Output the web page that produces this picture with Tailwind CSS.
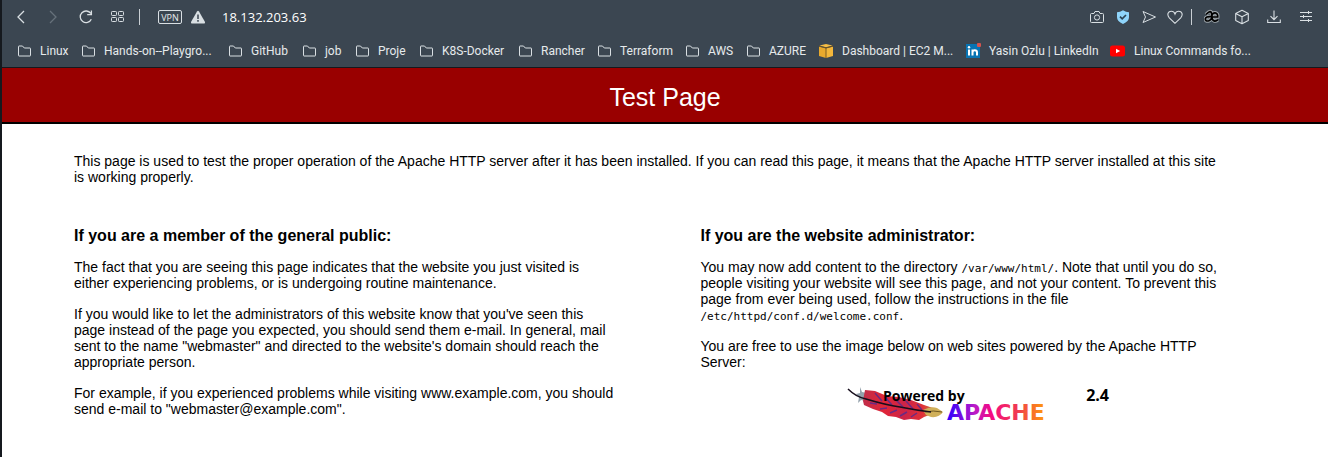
<!DOCTYPE html>
<html lang="en">
<head>
<meta charset="utf-8">
<meta name="viewport" content="width=device-width, initial-scale=1">
<title>Test Page</title>
<script src="https://cdn.jsdelivr.net/npm/@tailwindcss/browser@4"></script>
</head>
<body class="bg-white text-black">
<svg class="hidden" aria-hidden="true">
  <symbol id="folder" viewBox="0 0 14 12"><path d="M.5 10.500V1.500q0-.5.5-.5h3.500l1.800 2h5.700q.5 0 .5.500v7q0 .5-.5.500H1q-.5 0-.5-.5z" fill="none" stroke="#d9dfe3"/></symbol>
</svg>
<div class="min-h-screen border-l-2 border-[#15191e]">
<header class="border-b border-[#15191e] bg-[#3b4651] font-['Open_Sans',sans-serif] text-[#e6eaec]">
  <div class="flex h-[34px] items-center">
    <nav class="flex items-center" aria-label="Browser controls">
      <button class="ml-3 grid w-4 place-items-center" aria-label="Back"><svg class="h-4 w-4" viewBox="0 0 16 16" fill="none" stroke="#d9dfe3" stroke-width="1.300"><path d="M10 2 4 8l6 6"/></svg></button>
      <button class="ml-4 grid w-4 place-items-center" aria-label="Forward"><svg class="h-4 w-4" viewBox="0 0 16 16" fill="none" stroke="#66717b" stroke-width="1.300"><path d="m4 2 6 6-6 6"/></svg></button>
      <button class="ml-4 grid w-4 place-items-center" aria-label="Reload"><svg class="h-4 w-4" viewBox="0 0 16 16" fill="none" stroke="#d9dfe3" stroke-width="1.300"><path d="M13.300 10.200A5.800 5.800 0 1 1 12.800 4.500M13.400 1.500v4.200H9.200"/></svg></button>
      <button class="ml-4 grid w-4 place-items-center" aria-label="Speed dial"><svg class="h-4 w-4" viewBox="0 0 16 16" fill="none" stroke="#d9dfe3"><rect x="1.500" y="2.500" width="5" height="4" rx=".8"/><rect x="8.500" y="2.500" width="5" height="4" rx=".8"/><rect x="1.500" y="8.500" width="5" height="4" rx=".8"/><rect x="8.500" y="8.500" width="5" height="4" rx=".8"/></svg></button>
      <span class="ml-[13px] h-4 w-px bg-[#c9cfd4]"></span>
      <button class="ml-[18px] grid h-[14px] w-6 place-items-center rounded-xs border border-[#d9dfe3] text-[9px] leading-none">VPN</button>
      <button class="ml-2 grid w-4 place-items-center" aria-label="Not secure"><svg class="h-4 w-4" viewBox="0 0 16 16"><path d="M7 2.500q1-1.400 2 0l6 10.500q.4 1.500-1 1.500H2q-1.400 0-1-1.500z" fill="#d9dfe3"/><path d="M8 5.500v4.500M8 11v1.700" stroke="#3b4651" stroke-width="1.500"/></svg></button>
    </nav>
    <input class="ml-4 min-w-0 flex-1 bg-transparent text-[13px] leading-5 text-white" type="text" aria-label="Address" value="18.132.203.63">
    <div class="mr-[14px] flex items-center">
      <button class="grid w-4 place-items-center" aria-label="Snapshot"><svg class="h-4 w-4" viewBox="0 0 16 16" fill="none" stroke="#d9dfe3"><path d="M2.500 4.500H5l1-2h4l1 2h2.500q1 0 1 1v7q0 1-1 1h-11q-1 0-1-1v-7q0-1 1-1z"/><circle cx="8" cy="8.500" r="2.600"/></svg></button>
      <button class="ml-[10px] grid w-4 place-items-center" aria-label="Ad blocker"><svg class="h-4 w-4" viewBox="0 0 16 16"><path d="M8 1.300Q11 3.300 14 3.300v5q0 4-6 6.700-6-2.700-6-6.700v-5Q5 3.300 8 1.300z" fill="#8fd5fb"/><path d="m5 7.700 2.200 2.200L11 6" fill="none" stroke="#2d4454" stroke-width="1.700"/></svg></button>
      <button class="ml-[10px] grid w-4 place-items-center" aria-label="Send"><svg class="h-4 w-4" viewBox="0 0 16 16" fill="none" stroke="#d9dfe3"><path d="M2 2.500 14.500 8 2 13.500 4.500 8z"/></svg></button>
      <button class="ml-[10px] grid w-4 place-items-center" aria-label="Favorites"><svg class="h-4 w-4" viewBox="0 0 16 16" fill="none" stroke="#d9dfe3" stroke-width="1.100"><path d="M8 14.300 2.300 8.800C-.5 5.500 1.200 2.300 4.200 2.300 6.200 2.300 7.500 3.500 8 5 8.500 3.500 9.800 2.300 11.800 2.300c3 0 4.700 3.200 1.900 6.500z"/></svg></button>
      <span class="ml-2 h-4 w-px bg-[#c9cfd4]"></span>
      <button class="ml-3 grid w-4 place-items-center" aria-label="Extension"><svg class="h-4 w-4" viewBox="0 0 16 16" fill="none"><path d="M2 5.500Q7-.1 7.700 5v6M7.500 7.700C-.8 6.500.2 13.500 5 11.700q2-.7 2.700-2.700M8 8h5.700c.7-5.500-5.700-5.500-5.900-.5.200 5 3.700 5.500 6.200 3.200" stroke="#9da5aa" stroke-width="3.600"/><path d="M2 5.500Q7-.1 7.700 5v6M7.500 7.700C-.8 6.500.2 13.500 5 11.700q2-.7 2.700-2.700M8 8h5.700c.7-5.500-5.700-5.500-5.900-.5.200 5 3.700 5.500 6.200 3.200" stroke="#000" stroke-width="1.700"/></svg></button>
      <button class="ml-[14px] grid w-4 place-items-center" aria-label="Extensions"><svg class="h-4 w-4" viewBox="0 0 16 16" fill="none" stroke="#d9dfe3" stroke-width="1.100" stroke-linejoin="round"><path d="m8 1.300 6.300 3.200v7L8 14.700l-6.300-3.200v-7zM1.700 4.500 8 7.700l6.300-3.200M8 7.700v7"/></svg></button>
      <button class="ml-4 grid w-4 place-items-center" aria-label="Downloads"><svg class="h-4 w-4" viewBox="0 0 16 16" fill="none" stroke="#d9dfe3" stroke-width="1.100"><path d="M8 1.500v9M4.500 7.200 8 10.700l3.500-3.500M1.700 10.500v3h12.600v-3"/></svg></button>
      <button class="ml-4 grid w-4 place-items-center" aria-label="Easy setup"><svg class="h-4 w-4" viewBox="0 0 16 16" fill="none" stroke="#d9dfe3"><path d="M2 3.500h12M2 7.500h12M2 11.500h12M10.500 2v3M5.500 6v3M10.500 10v3"/></svg></button>
    </div>
  </div>
  <nav class="flex h-[33px] items-center overflow-hidden pl-4 font-[Roboto,sans-serif] text-xs whitespace-nowrap" aria-label="Bookmarks">
    <a href="#" class="flex w-16 shrink-0 items-center gap-2"><svg class="h-3 w-[14px] shrink-0"><use href="#folder"/></svg>Linux</a>
    <a href="#" class="flex w-[147px] shrink-0 items-center gap-2"><svg class="h-3 w-[14px] shrink-0"><use href="#folder"/></svg>Hands-on--Playgro...</a>
    <a href="#" class="flex w-[74px] shrink-0 items-center gap-2"><svg class="h-3 w-[14px] shrink-0"><use href="#folder"/></svg>GitHub</a>
    <a href="#" class="flex w-[53px] shrink-0 items-center gap-2"><svg class="h-3 w-[14px] shrink-0"><use href="#folder"/></svg>job</a>
    <a href="#" class="flex w-16 shrink-0 items-center gap-2"><svg class="h-3 w-[14px] shrink-0"><use href="#folder"/></svg>Proje</a>
    <a href="#" class="flex w-[99px] shrink-0 items-center gap-2"><svg class="h-3 w-[14px] shrink-0"><use href="#folder"/></svg>K8S-Docker</a>
    <a href="#" class="flex w-[79px] shrink-0 items-center gap-2"><svg class="h-3 w-[14px] shrink-0"><use href="#folder"/></svg>Rancher</a>
    <a href="#" class="flex w-[88px] shrink-0 items-center gap-2"><svg class="h-3 w-[14px] shrink-0"><use href="#folder"/></svg>Terraform</a>
    <a href="#" class="flex w-[61px] shrink-0 items-center gap-2"><svg class="h-3 w-[14px] shrink-0"><use href="#folder"/></svg>AWS</a>
    <a href="#" class="flex w-[71px] shrink-0 items-center gap-2"><svg class="h-3 w-[14px] shrink-0"><use href="#folder"/></svg>AZURE</a>
    <a href="#" class="flex w-[147px] shrink-0 items-center gap-2"><svg class="h-4 w-4 shrink-0" viewBox="0 0 16 16"><path d="m1 3.500 7 1.800v9.700l-7-2z" fill="#e8a92d"/><path d="m15 3.500-7 1.800v9.700l7-2z" fill="#f3b73b"/><path d="m1.500 2.500 6.500-1.500 6.500 1.500L8 4.300z" fill="#f5bd45"/><path d="m1 3.200 7 1.800 7-1.800M8 5v10" fill="none" stroke="#6d5220" stroke-width=".9"/></svg>Dashboard | EC2 M...</a>
    <a href="#" class="flex w-[145px] shrink-0 items-center gap-2"><svg class="h-4 w-4 shrink-0" viewBox="0 0 16 16"><rect x="1" y="1" width="14" height="14" fill="#0874b3"/><path d="M4 6.500v6M7.500 12.500v-6M7.500 9.500c0-3 4.500-3 4.500 0v3" stroke="#fff" stroke-width="2" fill="none"/><circle cx="4" cy="4.300" r="1.200" fill="#fff"/><rect x="12" width="4" height="4" rx="1" fill="#d5544f"/></svg>Yasin Ozlu | LinkedIn</a>
    <a href="#" class="flex shrink-0 items-center gap-2"><svg class="h-4 w-4 shrink-0" viewBox="0 0 16 16"><rect y="2.500" width="15" height="11" rx="2.500" fill="#f00"/><path d="m6 5.700 4.200 2.300L6 10.300z" fill="#fff"/></svg>Linux Commands fo...</a>
  </nav>
</header>
<main class="font-['Liberation_Sans',Arial,sans-serif] text-[14px] leading-4">
  <h1 class="border-b-2 border-black bg-[#990000] pt-3 pb-2 text-center text-[25px] leading-[34px] text-white">Test Page</h1>
  <div class="px-[72px] pt-[29px]">
    <p>This page is used to test the proper operation of the Apache HTTP server after it has been installed. If you can read this page, it means that the Apache HTTP server installed at this site<br>is working properly.</p>
    <div class="mt-[43px] flex justify-between">
      <section class="flex w-[47%] flex-col gap-[15px]">
        <h2 class="text-base leading-4 font-bold">If you are a member of the general public:</h2>
        <p>The fact that you are seeing this page indicates that the website you just visited is<br>either experiencing problems, or is undergoing routine maintenance.</p>
        <p>If you would like to let the administrators of this website know that you've seen this<br>page instead of the page you expected, you should send them e-mail. In general, mail<br>sent to the name "webmaster" and directed to the website's domain should reach the<br>appropriate person.</p>
        <p>For example, if you experienced problems while visiting www.example.com, you should<br>send e-mail to "webmaster@example.com".</p>
      </section>
      <section class="flex w-[47%] flex-col gap-[15px]">
        <h2 class="text-base leading-4 font-bold">If you are the website administrator:</h2>
        <p>You may now add content to the directory <code class="font-['DejaVu_Sans_Mono',monospace] text-[11px] leading-none">/var/www/html/</code>. Note that until you do so,<br>people visiting your website will see this page, and not your content. To prevent this<br>page from ever being used, follow the instructions in the file<br><code class="font-['DejaVu_Sans_Mono',monospace] text-[11px] leading-none">/etc/httpd/conf.d/welcome.conf</code>.</p>
        <p>You are free to use the image below on web sites powered by the Apache HTTP<br>Server:</p>
        <svg class="mt-0.5 h-9 w-[262px] self-center overflow-visible" viewBox="0 0 262 36" role="img" aria-label="Powered by Apache 2.4">
          <defs>
            <linearGradient id="word" x1="0" x2="1"><stop stop-color="#2b00ff"/><stop offset=".28" stop-color="#b81bc8"/><stop offset=".45" stop-color="#f50a82"/><stop offset=".72" stop-color="#f03a50"/><stop offset="1" stop-color="#ff9a0a"/></linearGradient>
            <linearGradient id="plume" x1="0" x2="1"><stop stop-color="#c02d4a"/><stop offset=".3" stop-color="#e02638"/><stop offset=".6" stop-color="#cc2448"/><stop offset=".85" stop-color="#e03038"/><stop offset="1" stop-color="#c87a40"/></linearGradient>
          </defs>
          <path d="m13 0 2 5 5 1-2 8-4-1-3 3 1-6-3-3 4-1z" fill="#93a0ab"/>
          <path d="m18 3 10 1 12 5 12 1 12 3 13 5 9 3-1 6-8 3-5 3-8-1-7 1-8-3-8-1-6-4-9-3-9-4-1-4z" fill="url(#plume)"/>
          <path d="m28 6 7 8M38 10l7 8M48 12l8 8M59 14l7 8M70 17l5 6M30 17l-7-1M40 21l-7 1M50 23l-7 3M60 25l-7 4M70 26l-6 4" stroke="#6b2a83" stroke-width="1.500"/>
          <path d="M76 23q8-4 14-2l6 4q-4 6-12 5l-5-2z" fill="#d0b05a"/>
          <path d="M78 25q8-2 17 0" fill="none" stroke="#6e5a24"/>
          <path d="M1 2q8 8 18 10 20 6 34 8 15 3 31 5" fill="none" stroke="#160d1c" stroke-width="1.500"/>
          <text x="36" y="14" class="font-['Open_Sans',sans-serif] text-[14px] font-bold">Powered by</text>
          <text x="262" y="14" text-anchor="end" class="font-['Open_Sans',sans-serif] text-[16px] font-bold">2.4</text>
          <text x="100" y="33" fill="url(#word)" class="font-['DejaVu_Sans',sans-serif] text-[22px] font-bold">APACHE</text>
        </svg>
      </section>
    </div>
  </div>
</main>
</div>
</body>
</html>
